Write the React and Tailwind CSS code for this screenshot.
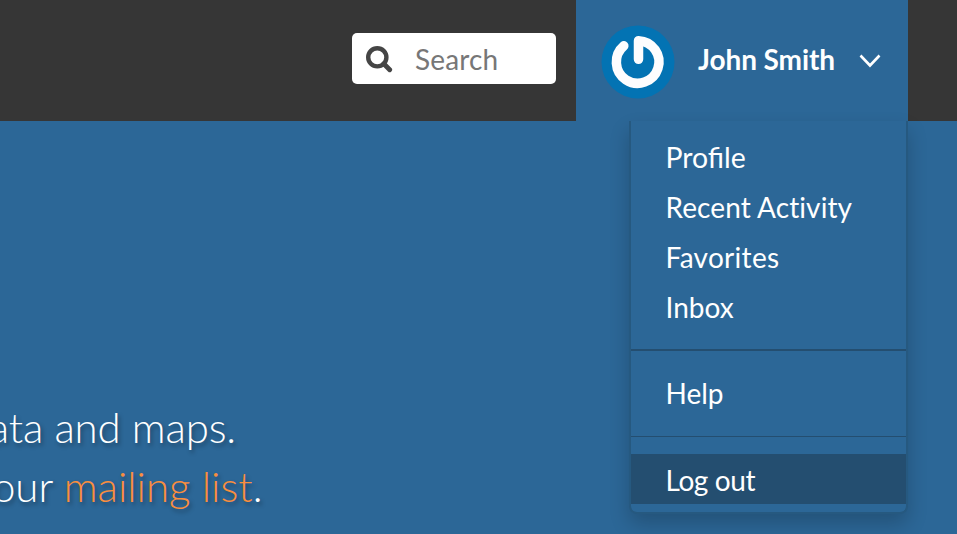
function SearchIcon() {
  return (
    <svg className="mt-[2px] h-[27px] w-[27px] shrink-0" viewBox="0 0 27 27" fill="none" stroke="#454545">
      <circle cx="11.3" cy="11.3" r="9.1" strokeWidth="4.4" />
      <path d="M17.8 17.8L23.7 23.7" strokeWidth="4.8" strokeLinecap="round" />
    </svg>
  );
}

function MenuItem({ children, active = false, textClass = "text-[28px]" }) {
  return (
    <a
      className={`flex h-[50px] items-center pl-[34.5px] leading-none text-white ${
        active ? "bg-[#244e70]" : ""
      }`}
    >
      <span className={`leading-[28px] ${textClass}`}>{children}</span>
    </a>
  );
}

function Avatar() {
  return (
    <svg className="h-[74px] w-[74px] shrink-0" viewBox="0 0 74 74" fill="none">
      <circle cx="37" cy="37" r="36.5" fill="#0373b3" />
      <path
        d="M37.5 34.3V15.7A21.3 21.3 0 1 1 22.8 20.8"
        stroke="#fdfdfe"
        strokeWidth="9.5"
        strokeLinecap="round"
        strokeLinejoin="round"
      />
    </svg>
  );
}

export default function App() {
  return (
    <div className="relative h-[534px] w-[957px] overflow-hidden bg-[#2c6797] font-['Lato',sans-serif]">
      <header className="flex h-[121px] justify-end bg-[#363636] pr-[49px]">
        <div className="mr-5 mt-[33px] flex h-[51px] w-[204px] items-center rounded-[5px] bg-white pl-[14px]">
          <SearchIcon />
          <span className="ml-[22px] mt-px text-[28px] leading-none tracking-[0.15px] text-[#777]">
            Search
          </span>
        </div>
        <div className="flex h-[121px] w-[332px] items-center bg-[#2c6797] pl-[25px] pt-[3px]">
          <Avatar />
          <span className="mb-[6px] ml-[23px] whitespace-nowrap text-[28px] font-bold leading-none tracking-[-0.1px] text-white">
            John Smith
          </span>
          <svg className="mb-[2px] ml-6 h-[14px] w-[22px]" viewBox="0 0 22 14" fill="none">
            <path d="M1.5 1.5L11 11.5L20.5 1.5" stroke="#fff" strokeWidth="2.6" />
          </svg>
        </div>
      </header>

      <main className="-ml-[14px] mt-[277px] text-[42px] font-light leading-[59px] text-white [text-shadow:2px_3px_4px_rgba(0,0,0,0.35)]">
        <p className="flex w-[250px] justify-end whitespace-nowrap tracking-[-0.15px]">
          data and maps.
        </p>
        <p className="flex w-[276.5px] justify-end whitespace-pre">
          our <span className="text-[#fa8e3e]">mailing list</span>.
        </p>
      </main>

      <nav className="absolute left-[629px] top-[121px] w-[279px] rounded-b-[8px] border-2 border-t-0 border-[#265980] bg-[#2c6797] pb-2 pt-[11px] shadow-[0_10px_20px_rgba(0,0,0,0.2)]">
        <MenuItem textClass="text-[28.4px]">Profile</MenuItem>
        <MenuItem textClass="text-[28px] tracking-[0.08px]">Recent Activity</MenuItem>
        <MenuItem textClass="text-[28px] tracking-[0.3px]">Favorites</MenuItem>
        <MenuItem>Inbox</MenuItem>
        <div className="mb-4 mt-[17px] h-[2px] bg-[#244e70]" />
        <MenuItem textClass="pt-[2px] text-[28px]">Help</MenuItem>
        <div className="mb-[17px] mt-[19px] h-px bg-[#244e70]" />
        <MenuItem active textClass="pt-[2px] text-[28px] tracking-[-0.4px]">
          Log out
        </MenuItem>
      </nav>
    </div>
  );
}
